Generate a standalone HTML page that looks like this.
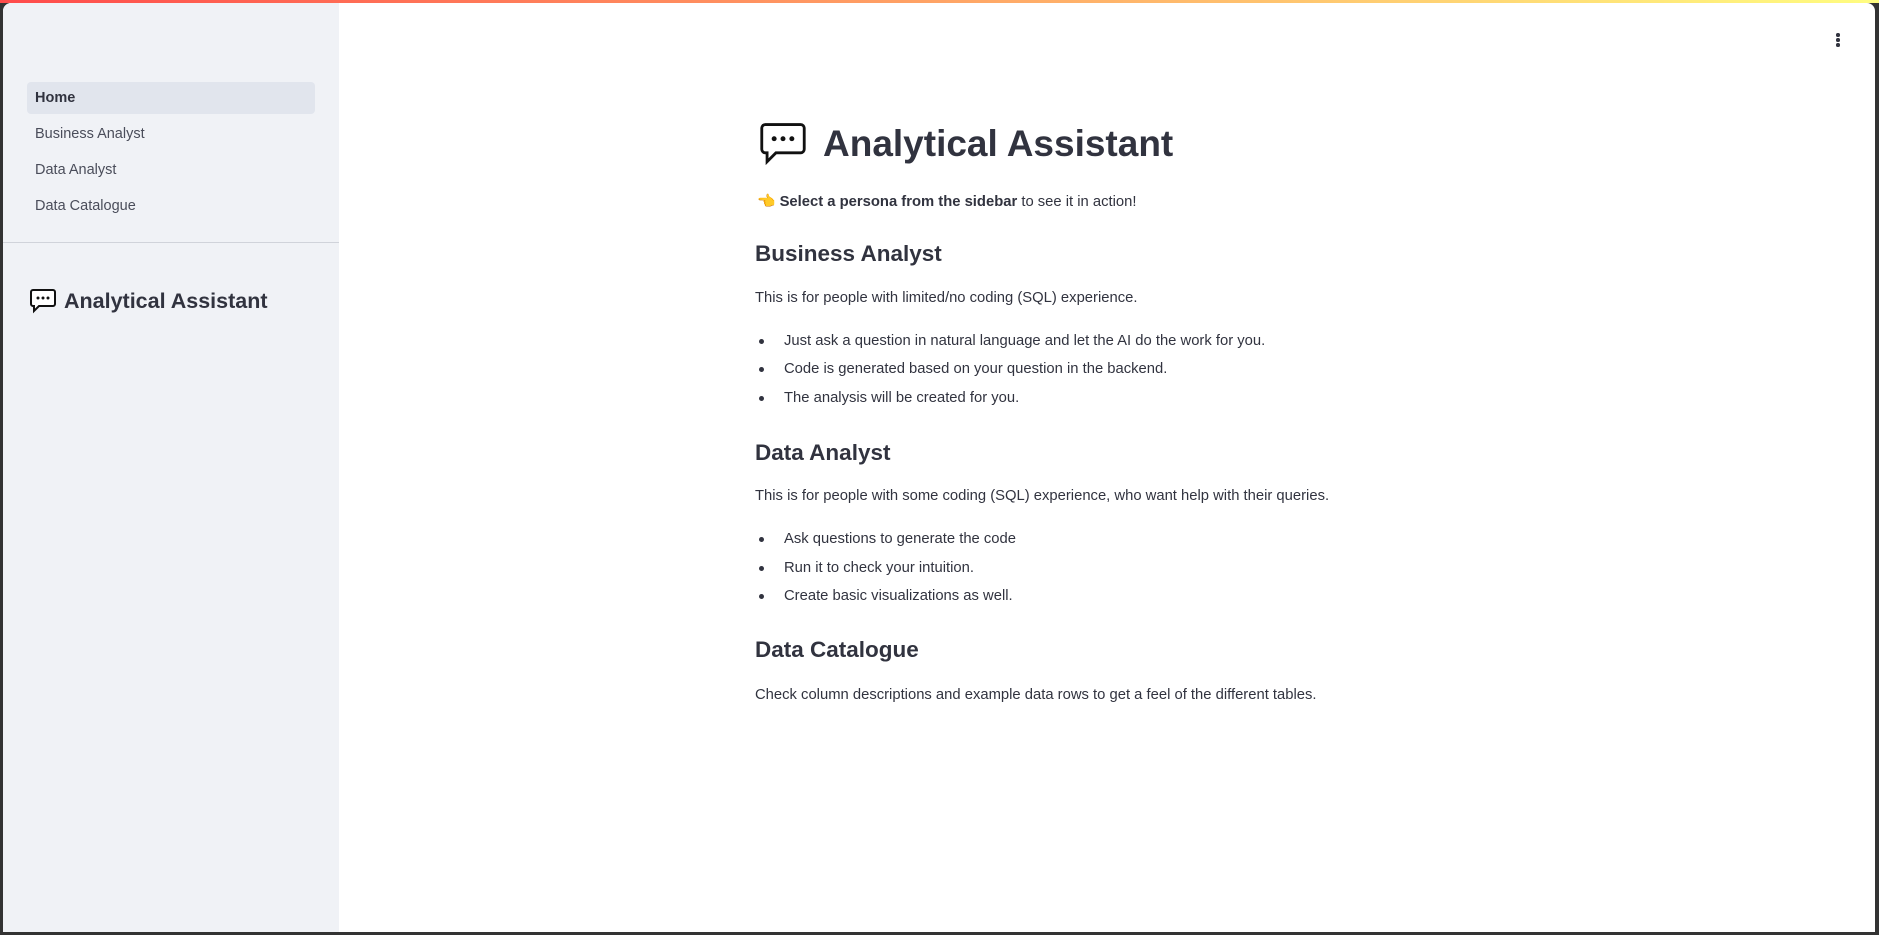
<!DOCTYPE html>
<html><head><meta charset="utf-8"><style>
*{margin:0;padding:0;box-sizing:border-box}
html,body{width:1879px;height:935px;overflow:hidden;background:#333;font-family:"Liberation Sans",sans-serif;color:#31333f}
.top{position:absolute;left:0;top:0;width:1879px;height:3px;background:linear-gradient(90deg,#ff4b4b,#fffd80)}
.frame{position:absolute;left:3px;top:3px;width:1872px;height:929px;background:#fff;border-radius:8px 8px 0 0;overflow:hidden}
.side{position:absolute;left:0;top:0;width:336px;height:100%;background:#f0f2f6}
.nav{position:absolute;left:24px;width:288px;height:32px;line-height:33px;padding-left:8px;font-size:14.5px;color:#4a4d5a;border-radius:4px}
.nav.act{background:#e1e5ed;color:#31333f;font-weight:bold}
.hr{position:absolute;left:0;top:239px;width:336px;height:1px;background:#d0d3da}
.stitle{position:absolute;left:26px;top:285px;font-size:21.5px;font-weight:bold;color:#31333f;display:flex;align-items:center;gap:7px}
.a{position:absolute;left:752px;white-space:nowrap}
h1{font-size:37px;font-weight:bold}
h2{font-size:22.5px;font-weight:bold}
.p{font-size:14.8px;color:#31333f}
.b{position:absolute;left:756px;width:5px;height:5px;border-radius:50%;background:#31333f}
.kebab{position:absolute;left:1833px;top:30px}
.kebab i{display:block;width:3.5px;height:3.5px;border-radius:50%;background:#31333f;margin-bottom:1.5px}
</style></head><body>
<div class="top"></div>
<div class="frame">
<div class="side">
<div class="nav act" style="top:79px">Home</div>
<div class="nav" style="top:115px">Business Analyst</div>
<div class="nav" style="top:151px">Data Analyst</div>
<div class="nav" style="top:187px">Data Catalogue</div>
<div class="hr"></div>
<div class="stitle"><svg width="28" height="26" viewBox="0 0 28 26"><path d="M4 2h20a2 2 0 0 1 2 2v12a2 2 0 0 1-2 2H10l-5 5v-5H4a2 2 0 0 1-2-2V4a2 2 0 0 1 2-2z" fill="#fff" stroke="#111" stroke-width="2"/><circle cx="9" cy="10" r="1.5" fill="#111"/><circle cx="14" cy="10" r="1.5" fill="#111"/><circle cx="19" cy="10" r="1.5" fill="#111"/></svg>Analytical Assistant</div>
</div>
<div class="kebab"><i></i><i></i><i></i></div>
<div class="a" style="top:118px;left:754px;display:flex;align-items:center;gap:14px"><svg width="52" height="46" viewBox="0 0 28 26"><path d="M4 2h20a2 2 0 0 1 2 2v12a2 2 0 0 1-2 2H10l-5 5v-5H4a2 2 0 0 1-2-2V4a2 2 0 0 1 2-2z" fill="#fff" stroke="#111" stroke-width="1.6"/><circle cx="9" cy="10" r="1.4" fill="#111"/><circle cx="14" cy="10" r="1.4" fill="#111"/><circle cx="19" cy="10" r="1.4" fill="#111"/></svg><h1>Analytical Assistant</h1></div>
<div class="a p" style="top:189px;left:754px"><span style="color:#e8a317">👈</span> <b>Select a persona from the sidebar</b> to see it in action!</div>
<h2 class="a" style="top:238px">Business Analyst</h2>
<div class="a p" style="top:287px">This is for people with limited/no coding (SQL) experience.</div>
<div class="b" style="top:336px"></div><div class="a p" style="top:330px;left:781px">Just ask a question in natural language and let the AI do the work for you.</div>
<div class="b" style="top:364px"></div><div class="a p" style="top:358px;left:781px">Code is generated based on your question in the backend.</div>
<div class="b" style="top:393px"></div><div class="a p" style="top:387px;left:781px">The analysis will be created for you.</div>
<h2 class="a" style="top:437px">Data Analyst</h2>
<div class="a p" style="top:485px">This is for people with some coding (SQL) experience, who want help with their queries.</div>
<div class="b" style="top:534px"></div><div class="a p" style="top:528px;left:781px">Ask questions to generate the code</div>
<div class="b" style="top:563px"></div><div class="a p" style="top:557px;left:781px">Run it to check your intuition.</div>
<div class="b" style="top:591px"></div><div class="a p" style="top:585px;left:781px">Create basic visualizations as well.</div>
<h2 class="a" style="top:634px">Data Catalogue</h2>
<div class="a p" style="top:684px">Check column descriptions and example data rows to get a feel of the different tables.</div>
</div>
</body></html>
